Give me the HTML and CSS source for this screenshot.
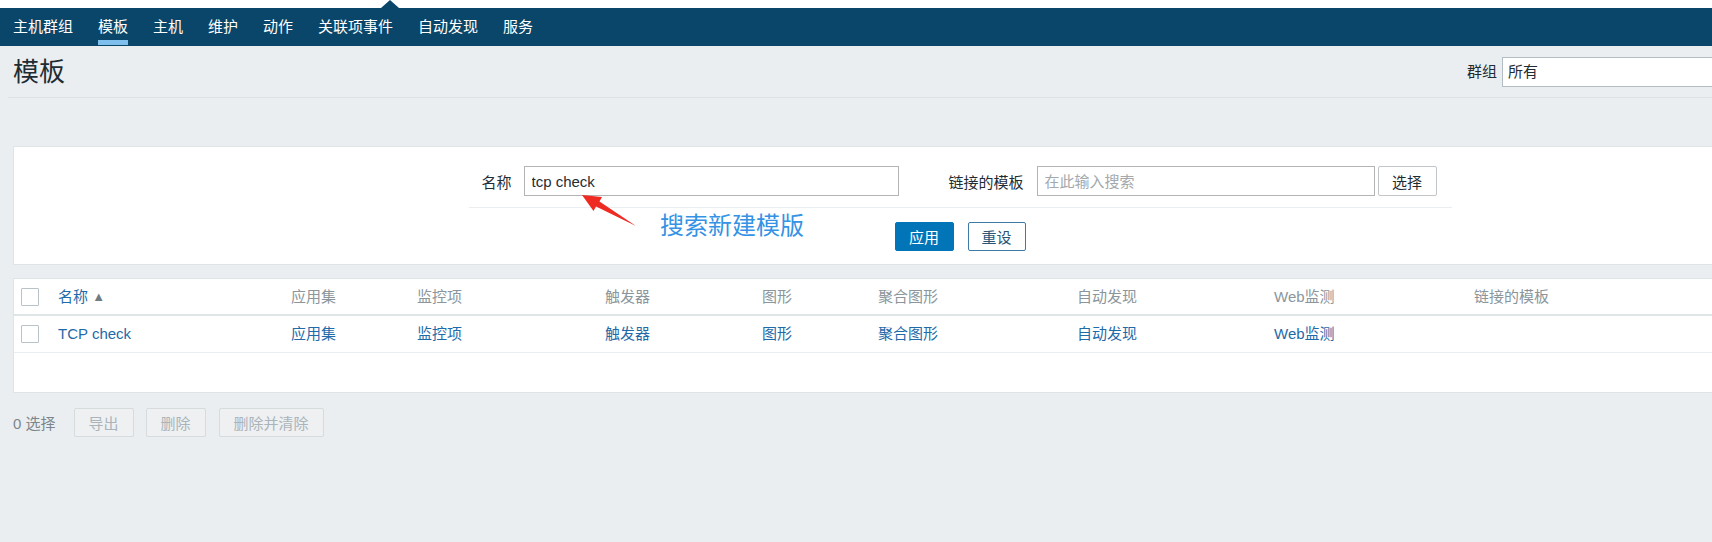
FILE: index.html
```html
<!DOCTYPE html>
<html lang="zh-CN">
<head>
<meta charset="utf-8">
<title>模板</title>
<link rel="stylesheet" href="styles.css">
</head>
<body>
<div class="page">
  <div class="top-strip"></div>
  <nav class="topnav">
    <ul class="nav-list">
      <li><a>主机群组</a></li>
      <li class="active"><a>模板</a></li>
      <li><a>主机</a></li>
      <li><a>维护</a></li>
      <li><a>动作</a></li>
      <li><a>关联项事件</a></li>
      <li><a>自动发现</a></li>
      <li><a>服务</a></li>
    </ul>
  </nav>

  <header class="page-header">
    <h1 class="page-title">模板</h1>
    <div class="group-filter">
      <span class="group-label">群组</span>
      <div class="group-select">所有</div>
    </div>
  </header>

  <section class="filter-box">
    <div class="filter-form">
      <div class="field field-name">
        <label class="field-label">名称</label>
        <input class="text-input name-input" type="text" value="tcp check">
      </div>
      <div class="field field-linked">
        <label class="field-label">链接的模板</label>
        <input class="text-input linked-input" type="text" placeholder="在此输入搜索">
        <button class="btn-grey">选择</button>
      </div>
    </div>
    <div class="filter-buttons">
      <button class="btn-primary">应用</button>
      <button class="btn-alt">重设</button>
    </div>
  </section>

  <section class="list-box">
    <div class="list-row list-head">
      <div class="cell cell-check"><span class="checkbox"></span></div>
      <div class="cell link">名称 <span class="sort-arrow">▲</span></div>
      <div class="cell">应用集</div>
      <div class="cell">监控项</div>
      <div class="cell">触发器</div>
      <div class="cell">图形</div>
      <div class="cell">聚合图形</div>
      <div class="cell">自动发现</div>
      <div class="cell">Web监测</div>
      <div class="cell">链接的模板</div>
    </div>
    <div class="list-row list-data">
      <div class="cell cell-check"><span class="checkbox"></span></div>
      <div class="cell link">TCP check</div>
      <div class="cell link">应用集</div>
      <div class="cell link">监控项</div>
      <div class="cell link">触发器</div>
      <div class="cell link">图形</div>
      <div class="cell link">聚合图形</div>
      <div class="cell link">自动发现</div>
      <div class="cell link">Web监测</div>
      <div class="cell"></div>
    </div>
    <div class="list-footer"></div>
  </section>

  <div class="action-bar">
    <span class="selected-count">0 选择</span>
    <button class="btn-disabled btn-export">导出</button>
    <button class="btn-disabled btn-delete">删除</button>
    <button class="btn-disabled btn-clear">删除并清除</button>
  </div>

  <svg class="annot-arrow" width="1920" height="542" viewBox="0 0 1920 542">
    <polygon points="582,195 602,197 599.5,201.5 636,226 596,206.5 593.5,211" fill="#ef2a22"/>
  </svg>
  <div class="annot-text">搜索新建模版</div>
</div>
</body>
</html>
```

FILE: styles.css
```css
* { box-sizing: border-box; }

html, body {
  margin: 0;
  padding: 0;
  background: #ebeef0;
  overflow: hidden;
}

body {
  font-family: "Liberation Sans", "Noto Sans CJK SC", sans-serif;
  font-size: 15px;
  color: #1f2c33;
}

.page {
  position: relative;
  width: 1920px;
  height: 542px;
}

.top-strip {
  height: 8px;
  background: #ffffff;
}

.topnav {
  position: relative;
  height: 38px;
  background: #0a466a;
}

.topnav::before {
  content: "";
  position: absolute;
  left: 381px;
  top: -8px;
  width: 0;
  height: 0;
  border-left: 9px solid transparent;
  border-right: 9px solid transparent;
  border-bottom: 8px solid #0a466a;
}

.nav-list {
  display: flex;
  margin: 0;
  padding: 0 0 0 0.5px;
  list-style: none;
  height: 100%;
}

.nav-list li {
  position: relative;
  display: flex;
  align-items: center;
}

.nav-list a {
  display: block;
  padding: 0 12.5px;
  color: #ffffff;
  line-height: 38px;
  font-size: 15px;
}

.nav-list li.active a::after {
  content: "";
  position: absolute;
  left: 12.5px;
  right: 12.5px;
  bottom: 1px;
  height: 5px;
  background: #7fbfee;
}

.page-header {
  display: flex;
  align-items: center;
  justify-content: space-between;
  height: 52px;
  margin: 0 0 0 8px;
  padding: 0 13px 0 5px;
  border-bottom: 1px solid #dde2e5;
}

.page-title {
  margin: 0;
  font-size: 26px;
  font-weight: normal;
  line-height: 30px;
  color: #1f2c33;
}

.group-filter {
  display: flex;
  align-items: center;
  gap: 5px;
}

.group-label {
  line-height: 20px;
}

.group-select {
  width: 405px;
  height: 30px;
  padding: 0 5px;
  background: #ffffff;
  border: 1px solid #b3bec4;
  line-height: 28px;
}

.filter-box {
  margin: 48px 13px 0 13px;
  background: #ffffff;
  border: 1px solid #dfe4e7;
}

.filter-form {
  display: flex;
  width: 983px;
  margin: 0 auto;
  padding: 19px 0 11px 0;
  border-bottom: 1px solid #ebeef0;
}

.field {
  display: flex;
  align-items: center;
}

.field-name .field-label {
  width: 43px;
  text-align: right;
  margin-right: 12px;
}

.field-linked .field-label {
  width: 113px;
  text-align: right;
  margin-right: 13px;
  margin-left: 12px;
}

.text-input {
  height: 30px;
  padding: 0 7px;
  border: 1px solid #b4b4b4;
  background: #ffffff;
  font-family: "Liberation Sans", "Noto Sans CJK SC", sans-serif;
  font-size: 15px;
  color: #1f2c33;
  outline: none;
}

.text-input::placeholder {
  color: #a3a9ac;
}

.name-input { width: 375px; }
.linked-input { width: 338px; }

.btn-grey {
  width: 59px;
  height: 30px;
  margin-left: 3px;
  background: #ffffff;
  border: 1px solid #c2c6c8;
  border-radius: 2px;
  font-family: "Liberation Sans", "Noto Sans CJK SC", sans-serif;
  font-size: 15px;
  color: #1f2c33;
  padding: 0;
}

.filter-buttons {
  display: flex;
  justify-content: center;
  gap: 14px;
  padding: 14px 0 13px 0;
}

.btn-primary,
.btn-alt {
  height: 29px;
  padding: 0;
  border-radius: 2px;
  font-family: "Liberation Sans", "Noto Sans CJK SC", sans-serif;
  font-size: 15px;
}

.btn-primary {
  width: 59px;
  background: #0275b8;
  border: 1px solid #0275b8;
  color: #ffffff;
}

.btn-alt {
  width: 58px;
  background: #ffffff;
  border: 1px solid #3d7aa6;
  color: #2a5675;
}

.list-box {
  margin: 13px 13px 0 13px;
  background: #ffffff;
  border: 1px solid #dfe4e7;
}

.list-row {
  display: grid;
  grid-template-columns: 44px 233px 126px 188px 157px 116px 199px 197px 200px 1fr;
  align-items: center;
}

.list-head {
  height: 37px;
  border-bottom: 2px solid #dfe4e7;
  color: #8a969c;
}

.list-data {
  height: 37px;
  border-bottom: 1px solid #ebeef0;
}

.cell {
  line-height: 20px;
  white-space: nowrap;
}

.link {
  color: #1f6aa8;
}

.sort-arrow {
  font-size: 13px;
  color: #6f7c83;
  vertical-align: 1px;
}

.cell-check {
  padding-left: 7px;
  display: flex;
  align-items: center;
}

.checkbox {
  display: block;
  width: 18px;
  height: 18px;
  border: 1px solid #b9c2c7;
  background: #ffffff;
  border-radius: 1px;
}

.list-footer {
  height: 39px;
}

.action-bar {
  display: flex;
  align-items: center;
  margin: 15px 13px 0 13px;
  height: 29px;
}

.selected-count {
  color: #7a868c;
  margin-right: 18px;
}

.btn-disabled {
  height: 29px;
  padding: 0;
  background: #eef0f2;
  border: 1px solid #d6dbde;
  border-radius: 2px;
  font-family: "Liberation Sans", "Noto Sans CJK SC", sans-serif;
  font-size: 15px;
  color: #aab4ba;
}

.btn-export { width: 60px; }
.btn-delete { width: 60px; margin-left: 12px; }
.btn-clear { width: 105px; margin-left: 13px; }

.annot-arrow {
  position: absolute;
  left: 0;
  top: 0;
  pointer-events: none;
}

.annot-text {
  position: absolute;
  left: 660px;
  top: 208px;
  font-family: "Noto Sans CJK SC", sans-serif;
  font-size: 24px;
  line-height: 32px;
  color: #3592e4;
}
```
